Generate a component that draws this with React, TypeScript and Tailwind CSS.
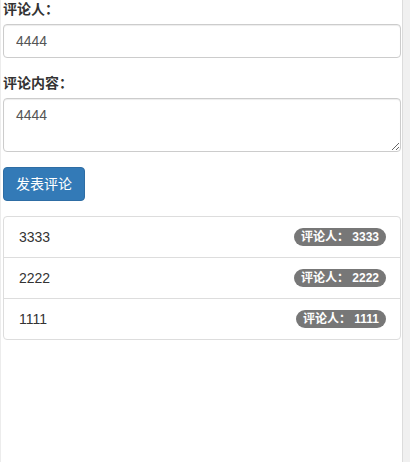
const comments = [
  { name: '3333', content: '3333' },
  { name: '2222', content: '2222' },
  { name: '1111', content: '1111' },
]

const font = 'font-["Liberation_Sans","Noto_Sans_CJK_SC",sans-serif]'

export default function App() {
  return (
    <div className={`h-[471px] w-[410px] overflow-hidden bg-white text-[14px] leading-5 text-[#333] ${font}`}>
      <div className="flex h-[462px]">
        <div className="h-full w-px bg-[#ececec]" />
        <div className="min-w-0 flex-1 pl-[2px] pr-px">
          <div className="-mt-px">
            {/* ── 评论人 ── */}
            <div className="mb-[15px]">
              <label className="mb-[5px] block font-bold">评论人：</label>
              <input
                readOnly
                value="4444"
                className="block h-[34px] w-full rounded border border-[#ccc] px-3 py-1.5 text-[14px] text-[#555] shadow-[inset_0_1px_1px_rgba(0,0,0,0.075)] outline-none"
              />
            </div>

            {/* ── 评论内容 ── */}
            <div className="mb-[15px]">
              <label className="mb-[5px] block font-bold">评论内容：</label>
              <textarea
                readOnly
                rows={2}
                value="4444"
                className="block h-[54px] w-full rounded border border-[#ccc] px-3 py-1.5 text-[14px] leading-5 text-[#555] shadow-[inset_0_1px_1px_rgba(0,0,0,0.075)] outline-none"
              />
            </div>

            <button
              type="button"
              className="mb-[15px] block h-[34px] rounded border border-[#2e6da4] bg-[#337ab7] px-3 py-1.5 text-[14px] leading-5 text-white"
            >
              发表评论
            </button>

            {/* ── comment list ── */}
            <ul className="rounded border border-[#ddd]">
              {comments.map((c, i) => (
                <li
                  key={c.name}
                  className={`flex items-center justify-between pl-[15px] pr-[14px] ${i > 0 ? 'h-[41px] border-t border-[#ddd]' : 'h-10'}`}
                >
                  <span>{c.content}</span>
                  <span className="rounded-[10px] bg-[#777] px-[7px] py-[3px] text-[12px] font-bold leading-3 text-white">
                    评论人： {c.name}
                  </span>
                </li>
              ))}
            </ul>
          </div>
        </div>
        <div className="h-full w-[8px] border-l border-[#dcdcdc] bg-[#f0f0f0]" />
      </div>
    </div>
  )
}
